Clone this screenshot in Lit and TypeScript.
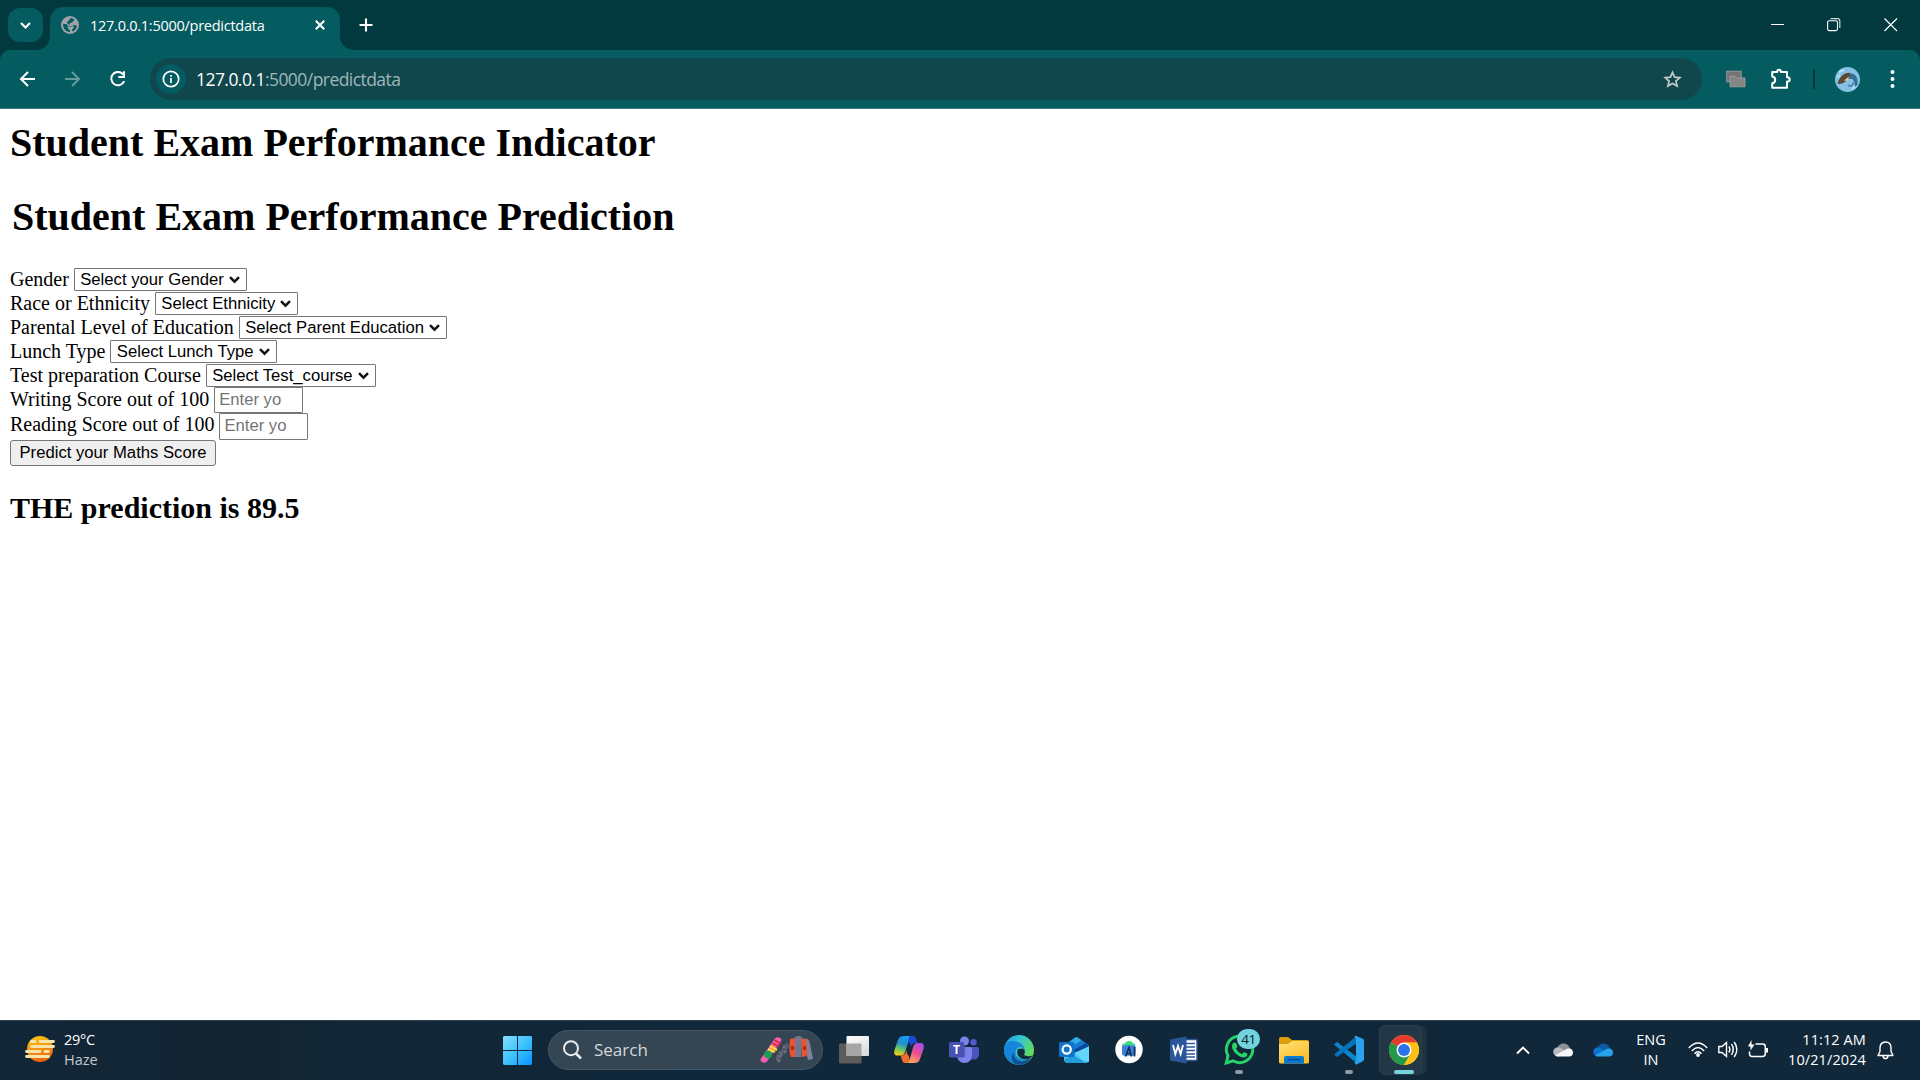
import { LitElement, html, css, svg, TemplateResult } from "lit";
import { customElement } from "lit/decorators.js";

const icon = (w: number, h: number, body: TemplateResult) =>
  html`<svg width=${w} height=${h} viewBox="0 0 ${w} ${h}" fill="none">${body}</svg>`;

const chevron = svg`<path d="M2 3.2 L6.5 7.7 L11 3.2" stroke="#111" stroke-width="2.4"/>`;

@customElement("browser-bar")
class BrowserBar extends LitElement {
  static styles = css`
    :host { display: block; height: 109px; font-family: "Open Sans", "Noto Sans", sans-serif; color: #fff; }
    svg { display: block; flex: none; }
    .strip { height: 50px; background: #02393e; display: flex; align-items: flex-start; }
    .menu { width: 35px; height: 34px; margin: 8px 7px 0 8px; border-radius: 12px; background: #045b60; display: grid; place-items: center; }
    .tab { position: relative; width: 290px; height: 43px; margin-top: 7px; box-sizing: border-box; padding: 0 15px 7px 11px; border-radius: 13px 13px 0 0; background: #045b60; display: flex; align-items: center; }
    .flare { position: absolute; bottom: 0; width: 13px; height: 13px; }
    .flare.l { left: -13px; background: radial-gradient(circle at 0 0, transparent 12.5px, #045b60 13px); }
    .flare.r { right: -13px; background: radial-gradient(circle at 100% 0, transparent 12.5px, #045b60 13px); }
    .title { margin-left: 11px; flex: 1; font-size: 14.5px; letter-spacing: -0.26px; white-space: nowrap; line-height: 20px; padding-top: 1px; }
    .plus { margin: 18px 0 0 19px; }
    .spacer { flex: 1; }
    .win { display: flex; margin: 18px 22px 0 0; gap: 43px; }
    .wrap { background: #02393e; }
    .bar { height: 58px; background: #045b60; border-bottom: 1px solid #3d7f86; border-radius: 10px 10px 0 0; display: flex; align-items: center; padding: 0 21px 0 19px; }
    .nav { display: flex; gap: 28px; width: 131px; }
    .omni { width: 1552px; height: 42px; border-radius: 21px; background: #10474d; box-sizing: border-box; padding: 0 20px 0 6px; display: flex; align-items: center; }
    .info { width: 30px; height: 30px; border-radius: 50%; background: #045b60; display: grid; place-items: center; }
    .url { margin-left: 10px; flex: 1; font-size: 17.5px; letter-spacing: -0.55px; color: #a0b6b9; line-height: 24px; }
    .url b { font-weight: 400; color: #fff; }
    .ext { margin-left: 24px; }
    .puzzle { margin-left: 24px; margin-right: 1px; }
    .sep { width: 2px; height: 20px; background: #02393e; margin: 0 20px 0 20px; }
    .dots { margin-left: 30px; }
  `;

  render() {
    return html`
      <div class="strip">
        <div class="menu">${icon(13, 11, svg`<path d="M2 3 L6.5 7.5 L11 3" stroke="#fff" stroke-width="2.2"/>`)}</div>
        <div class="tab">
          <span class="flare l"></span><span class="flare r"></span>
          ${icon(18, 18, svg`<circle cx="9" cy="9" r="9" fill="#9fa3a7"/>
            <path d="M9.8 2.2 C7.8 2.8 9 4.6 7.2 5 C5.6 5.4 6.8 7 5.4 7.2 H2.2 C1.4 11.8 4.6 15.9 9 16 V14 C6.8 13.6 7.4 11.4 6 10.4 H10.4 C12.4 11 12.2 12.4 11.2 13 V15.6 C14 14.8 15.8 12.2 15.8 9.4 C14.8 10 14.2 9 12.8 9 H9.2 C7.8 8 8.8 6.6 10.2 6.8 C11.8 6.8 11.2 5.2 12.6 5 L13.4 3.7 C12.4 2.6 11.2 2.2 9.8 2.2Z" fill="#045b60"/>
            <path d="M2.4 7.4 H5.2 C6.6 7.8 6.6 8.4 7.6 9.4 H10.6 C12 9.8 12.6 11.2 11.4 12.6" stroke="#9fa3a7" stroke-width="1.4"/>`)}
          <span class="title">127.0.0.1:5000/predictdata</span>
          ${icon(10, 10, svg`<path d="M.8 .8 L9.2 9.2 M9.2 .8 L.8 9.2" stroke="#fff" stroke-width="2"/>`)}
        </div>
        <div class="plus">${icon(14, 14, svg`<path d="M7 .5 V13.5 M.5 7 H13.5" stroke="#fff" stroke-width="2.1"/>`)}</div>
        <div class="spacer"></div>
        <div class="win">
          ${icon(13, 13, svg`<path d="M0 6.5 H13" stroke="#fff"/>`)}
          ${icon(14, 14, svg`<path d="M3.5 .7 H10.8 Q12.8 .7 12.8 2.7 V10" stroke="#cdd9da" stroke-width="1.2"/><rect x=".6" y="2.7" width="9.9" height="9.9" rx="1.6" stroke="#fff" stroke-width="1.1"/>`)}
          ${icon(14, 14, svg`<path d="M.5 .5 L13 13 M13 .5 L.5 13" stroke="#fff" stroke-width="1.15"/>`)}
        </div>
      </div>
      <div class="wrap"><div class="bar">
        <div class="nav">
          ${icon(17, 16, svg`<path d="M16 8 H2.6 M9 1 L2 8 L9 15" stroke="#fff" stroke-width="2"/>`)}
          ${icon(17, 16, svg`<path d="M1 8 H14.6 M8 1 L15 8 L8 15" stroke="#659b9f" stroke-width="2"/>`)}
          ${icon(18, 16, svg`<path d="M14.4 3.6 A6.7 6.7 0 1 0 15.2 10.2" stroke="#fff" stroke-width="2"/><path d="M16 .3 V7 H9.3 V5.1 H14 V.3Z" fill="#fff"/>`)}
        </div>
        <div class="omni">
          <div class="info">${icon(18, 18, svg`<circle cx="9" cy="9" r="7.7" stroke="#fff" stroke-width="1.7"/><path d="M9 8 V13 M9 5 V6.7" stroke="#fff" stroke-width="1.7"/>`)}</div>
          <span class="url"><b>127.0.0.1</b>:5000/predictdata</span>
          ${icon(19, 19, svg`<path d="M9.5 2.4 L11.6 7.1 L16.8 7.6 L12.9 11 L14.1 16.1 L9.5 13.4 L4.9 16.1 L6.1 11 L2.2 7.6 L7.4 7.1Z" stroke="#c3c9ca" stroke-width="1.7"/>`)}
        </div>
        <div class="ext">${icon(20, 18, svg`<rect x=".7" y="1.2" width="14.5" height="10.6" fill="#757575" stroke="#969696"/><path d="M4 6.2 H9 L10.4 8 H19 V16.8 H4Z" fill="#858585" stroke="#a3a3a3" stroke-width=".8"/>`)}</div>
        <div class="puzzle">${icon(22, 22, svg`<path d="M2.2 4 H7.2 C7.2 1 10.8 1 10.8 4 H17 V9.2 C20.6 9.2 20.6 13.6 17 13.6 V19.8 H2.2 V15.2 C6.2 15 6.2 9 2.2 8.6Z" stroke="#fff" stroke-width="2" stroke-linejoin="round"/>`)}</div>
        <div class="sep"></div>
        ${icon(25, 25, svg`<circle cx="12.5" cy="12.5" r="12.5" fill="#86c1e5"/><path d="M4 5 L9 3 M2 10 L5 8 M17 22 L22 18" stroke="#b9e0f3" stroke-width="2"/><path d="M12 8 C17 4 24 8 22.500 18 L20 20 C20 14 18 11 14 12Z" fill="#376d91"/><path d="M2.5 16.500 C5 9 10 5 15.5 6 C14 8 15 9 13 12 C11 15 6 18 2.5 16.500Z" fill="#5a4836"/><path d="M9 13.500 L14 9.500 L12.500 14Z" fill="#e2cf9a"/><path d="M13 18 C15 20 18 19 19 15" stroke="#4c8bb3" stroke-width="2"/>`)}
        <div class="dots">${icon(5, 18, svg`<circle cx="2.5" cy="2" r="2" fill="#fff"/><circle cx="2.5" cy="9" r="2" fill="#fff"/><circle cx="2.5" cy="16" r="2" fill="#fff"/>`)}</div>
      </div></div>`;
  }
}

@customElement("exam-page")
class ExamPage extends LitElement {
  static styles = css`
    :host { display: block; box-sizing: border-box; height: 911px; background: #fff; color: #000; padding: 11px 10px 10px; font-family: "Liberation Serif", "Times New Roman", serif; }
    h1 { margin: 0; font-size: 40px; line-height: 46px; height: 46px; font-weight: 700; white-space: nowrap; }
    .second { margin-top: 28px; padding-left: 2px; }
    form { margin-top: 28px; font-size: 20px; display: flex; flex-direction: column; }
    .row { height: 24px; display: flex; align-items: flex-start; white-space: pre; line-height: 22px; }
    .row.score { height: 26px; margin-top: -1px; }
    .row.last { height: 27px; }
    .box { display: grid; height: 23px; }
    .box > * { grid-area: 1 / 1; }
    .box svg { justify-self: end; align-self: center; margin-right: 6px; pointer-events: none; }
    select { appearance: none; margin: 0; box-sizing: border-box; width: 100%; height: 23px; border: 1px solid #767676; border-radius: 1px; background: #fff; color: #000; padding: 0 0 0 5.4px; font: 16.667px/20px "Liberation Sans", Arial, sans-serif; }
    input { margin: 0; box-sizing: border-box; width: 89px; height: 26px; border: 1px solid #767676; border-radius: 1px; padding: 0 20px 1px 4px; font: 16.667px "Liberation Sans", Arial, sans-serif; }
    .last input { height: 27px; padding-bottom: 2px; }
    .score label { padding-top: 1px; }
    input::placeholder { color: #757575; }
    button { margin: 0; box-sizing: border-box; width: 206px; height: 26px; padding: 0; border: 1px solid #767676; border-radius: 3px; background: #efefef; color: #000; font: 16.667px/22px "Liberation Sans", Arial, sans-serif; white-space: nowrap; }
    h2 { margin: 25px 0 0; font-size: 30px; line-height: 34px; }
    .w173 { width: 173px; } .w143 { width: 143px; } .w208 { width: 208px; } .w167 { width: 167px; } .w170 { width: 170px; }
  `;

  private fields = [
    ["Gender", "Select your Gender", "w173"],
    ["Race or Ethnicity", "Select Ethnicity", "w143"],
    ["Parental Level of Education", "Select Parent Education", "w208"],
    ["Lunch Type", "Select Lunch Type", "w167"],
    ["Test preparation Course", "Select Test_course", "w170"],
  ];

  render() {
    return html`
      <h1>Student Exam Performance Indicator</h1>
      <h1 class="second">Student Exam Performance Prediction</h1>
      <form>
        ${this.fields.map(([label, text, width]) => html`<div class="row"><label>${label} </label><span class="box ${width}"><select><option>${text}</option></select>${icon(13, 11, chevron)}</span></div>`)}
        <div class="row score"><label>Writing Score out of 100 </label><input placeholder="Enter your Writing Score"></div>
        <div class="row last"><label>Reading Score out of 100 </label><input placeholder="Enter your Reading Score"></div>
        <button type="button">Predict your Maths Score</button>
      </form>
      <h2>THE prediction is 89.5</h2>`;
  }
}

const apps: { body: TemplateResult; mark?: string; badge?: string }[] = [
  { body: svg`<rect x="0" y="8.5" width="22.500" height="20" rx="1" fill="#5c5c5c"/><rect x="7.500" y="1" width="22.500" height="20" rx="1" fill="url(#tv)"/><path d="M7.500 8.500 H22.500 V21 H8.500 Q7.500 21 7.500 20Z" fill="#a6a6a6"/>` },
  { body: svg`<path d="M10 1 H19 C17 1 15.500 3 15 5 L11 17 C10 20 8.500 20.500 6 20.500 H3 C.5 20.500 -.3 18 .5 15 L4 5 C5 2 7 1 10 1Z" fill="url(#cp1)"/><path d="M16 1 H19 C21 1 22 3 22.600 5.500 L23.300 8 C20 8 18 8 16.500 12 C17 7 14 8 14.500 5 C15 3 15 1 16 1Z" fill="#1b48d4"/><path d="M20 28 H12 C14 28 15.200 26 16 23.500 L19.200 12 C20 9 21.500 8 24 8 H27 C29.500 8 30.500 10.500 29.500 14 L26 24 C25 27 23 28 20 28Z" fill="url(#cp2)"/><path d="M14 28 H11 C9 28 8.300 26 7.500 23.500 L6.800 20.500 C10 20.500 11 19.500 12.500 15 C13 22 15 19 15.400 23 C15 26 15 28 14 28Z" fill="#f36a30"/>` },
  { body: svg`<circle cx="24.500" cy="7.200" r="3.200" fill="#5059c9"/><path d="M21 12 H28.500 Q30 12 30 13.500 V19 C30 22.500 27.500 24.500 25 24.500 H21Z" fill="#4b53bc"/><circle cx="15.500" cy="6" r="4.500" fill="#7b83eb"/><path d="M8 12 H21.500 Q23 12 23 13.500 V20 C23 25 19.500 28 15.500 28 C11.500 28 8 25 8 20Z" fill="#7b83eb"/><path d="M9 11 H16.500 V22 H8.500Z" fill="#4b50ac" opacity=".5"/><rect y="7" width="15" height="15.500" rx="1.300" fill="#4a51b5"/><text x="7.500" y="19" text-anchor="middle" font-size="12" font-weight="700" fill="#fff">T</text>` },
  { body: svg`<circle cx="15" cy="15" r="15" fill="url(#ed1)"/><path d="M0 15 C0 8 6 5 12 6.500 C18 8 21 12 20.500 16 C20 12.500 16 11 13.500 13 C9 17 13 24 18 24.500 C22 25.500 25.500 24 27.800 21.500 C24 29 17 31 11 29.300 C4 27 0 21 0 15Z" fill="#1684d8"/><path d="M9.800 17.500 C9 23 14 28 20 26 C23.500 25 26 23.500 27.800 21.500 C24 29 17 31 11 29.300 C7 25.500 7 20 9.800 17.500Z" fill="#104f91"/><path d="M20 19.800 C21 18.500 21 17 20.500 15 L18.500 13.500 L14 14 C12 18 14 22.500 18.500 24 C22.500 25 25.600 23.700 27.800 21.500 L29 20.500 C26 21.500 21 21.500 20 19.800Z" fill="#112b3f"/>` },
  { body: svg`<path d="M5 10.500 L16 2.500 Q17.200 1.600 18.500 2.500 L28.500 9 Q30 10 30 11.500 V24 H5Z" fill="#127cd0"/><path d="M5 10.500 L17.500 2 L22.500 5 L10 14Z" fill="#36a9e8"/><path d="M13 16 L27 8 L30 11 L15 21Z" fill="#0c469b"/><path d="M5 20 L15 18 L30 11.500 V24 Q30 28 26 28 H9 Q5 28 5 24Z" fill="#43c9f4"/><path d="M16 18 L30 11.500 V27 L24 25Z" fill="#62d7fa"/><path d="M6 24 L14 20 L27 28 H9 Q6 28 6 24Z" fill="#269ddb"/><rect y="7" width="15.500" height="15" rx="1.500" fill="#0e73cd"/><circle cx="7.700" cy="14.500" r="4.100" stroke="#fff" stroke-width="2.200"/>` },
  { body: svg`<circle cx="15" cy="14.500" r="13.700" fill="#fff"/><path d="M10.500 9.500 Q11 6 15 6 Q19 6 19.500 9.500Z" fill="#3ddc84"/><rect x="8" y="9.200" width="13.500" height="11.500" rx="2.500" fill="#3c7fe4"/><path d="M11.500 21.500 L15 12.500 L17.500 21.500 M13 18.500 H17.500 M20.500 12 V21.500" stroke="#12304a" stroke-width="1.700"/><path d="M8.500 9.500 H21" stroke="#3ddc84" stroke-width="1.800"/>` },
  { body: svg`<rect x="15" y="4.500" width="13" height="21" rx="1" fill="#fff" stroke="#2b579a" stroke-width="1.500"/><path d="M17 8.500 H26 M17 12 H26 M17 15.500 H26 M17 19 H26 M17 22 H26" stroke="#2b579a" stroke-width="1.500"/><path d="M1 4.500 L17.500 1.500 V28.500 L1 25.500Z" fill="#2b579a"/><path d="M4 10 L6.300 19 L9 11 L11.600 19 L14 10" stroke="#fff" stroke-width="1.900"/>` },
  { body: svg`<path d="M2.300 28 L4 20.700 A13.200 13.200 0 1 1 9 25.800Z" stroke="#25d366" stroke-width="3"/><path d="M10 7.500 L12 8 L13.500 11.500 L12 13.700 C13.500 16.500 15.500 18 18 19 L20 17 L23.500 18.800 C23.500 22 21 23 18.500 22.500 C13 21 8.500 16 8 12 C7.800 9.500 9 8 10 7.500Z" fill="#25d366"/>`, mark: "dot", badge: "41" },
  { body: svg`<path d="M0 4 Q0 2 2 2 H9 L13 5 H28 Q30 5 30 7 V12 H0Z" fill="#dd9d0c"/><path d="M0 9 H9 L13 6 H28.500 Q30 6 30 7.500 V27 Q30 28.500 28.500 28.500 H1.500 Q0 28.500 0 27Z" fill="url(#fo)"/><path d="M5 28.500 V23 Q5 21 7 21 H23 Q25 21 25 23 V28.500Z" fill="#087bd1"/><path d="M8.500 24.700 H21.500" stroke="#084b86" stroke-width="1.300"/>` },
  { body: svg`<path d="M0 9.500 L3 7 L23 22 V28.500 Z" fill="#0d87cb"/><path d="M0 19.500 L3 22 L23 8 V.8Z" fill="#0873b9"/><path d="M21 .5 L28.800 3.800 Q30 4.300 30 6 V24 Q30 25.500 28.800 26.200 L22 29.700 L20.500 28 L22 26 V4 L20.500 2Z" fill="#2aa3ec"/>`, mark: "dot" },
  { body: svg`<circle cx="15" cy="15" r="15" fill="#fbc116"/><path d="M15 15 L2 7.500 A15 15 0 0 1 28 7.500 H15Z" fill="#e33b2e"/><path d="M2 7.500 A15 15 0 0 0 15 30 L21.500 18.750 L15 15Z" fill="#24984b"/><path d="M15 7.500 H28 A15 15 0 0 1 15 30 L21.500 18.750Z" fill="#fbc116"/><circle cx="15" cy="15" r="7.500" fill="#fff"/><circle cx="15" cy="15" r="6" fill="#2b73e8"/>`, mark: "active" },
];

@customElement("task-bar")
class TaskBar extends LitElement {
  static styles = css`
    :host { display: block; height: 60px; box-sizing: border-box; border-top: 1px solid #2c4150; background: linear-gradient(90deg, #112638, #132533 12%, #10283b 35%, #11273a 100%); color: #fff; font-family: "Open Sans", "Noto Sans", sans-serif; }
    .bar { height: 58px; display: flex; align-items: center; }
    svg { display: block; flex: none; overflow: visible; }
    .weather { width: 478px; padding-left: 25px; display: flex; gap: 9px; font-size: 14.5px; line-height: 20px; letter-spacing: -0.3px; }
    .haze { color: #c3c9ce; letter-spacing: 0; }
    .search { width: 275px; height: 40px; margin: 0 3px 0 16px; box-sizing: border-box; border: 1px solid #465866; border-radius: 20px; background: #344653; display: flex; align-items: center; padding: 0 9px 0 14px; }
    .search span { flex: 1; margin-left: 12px; font-size: 17px; line-height: 24px; color: #d3d8db; }
    .app { position: relative; width: 55px; height: 58px; display: grid; place-items: center; }
    .app svg { position: relative; }
    .dot::after { content: ""; position: absolute; bottom: 5px; width: 8px; height: 4px; border-radius: 2px; background: #8f9aa3; }
    .active::before { content: ""; position: absolute; left: 3px; top: 4px; width: 43px; height: 50px; border-radius: 6px; background: #243746; border: 1px solid #2c3f4d; box-shadow: 6px 0 0 -1px #1e3342; box-sizing: border-box; }
    .active::after { content: ""; position: absolute; bottom: 5px; width: 20px; height: 4px; border-radius: 2px; background: #77d3da; }
    .badge { position: absolute; left: 26px; top: 8px; width: 23px; height: 20px; border-radius: 10px; background: #71d3db; color: #0c2228; font-size: 13.5px; line-height: 20px; text-align: center; letter-spacing: -0.5px; }
    .tray { margin-left: auto; display: flex; align-items: center; padding-right: 26px; }
    .lang { width: 50px; margin: 0 12px 0 13px; text-align: center; font-size: 14.5px; line-height: 20px; }
    .clock { width: 90px; margin: 0 11px 0 8px; text-align: right; font-size: 14.5px; line-height: 20px; letter-spacing: 0.1px; white-space: nowrap; display: flex; flex-direction: column; align-items: flex-end; }
    .g20 { display: flex; gap: 20px; margin-left: 23px; }
    .g10 { display: flex; gap: 10px; }
  `;

  private cloud(a: string, b: string, c: string) {
    return icon(20, 14, svg`<path d="M4 6 C5 2 8 .5 11 .5 C14 .5 16.500 3 17 6 L10 9Z" fill=${a}/><path d="M1.500 12 C-1 9 .5 5 4 4.500 C7 4 8.500 5.500 10 6.500 L16 10 L5 13.500Z" fill=${b}/><path d="M2 12.500 L12 7 C17 3.500 20 6.500 20 9.500 C20 12 18.500 13.500 16 13.500 H4.500 Q3 13.500 2 12.500Z" fill=${c}/>`);
  }

  render() {
    return html`
      <div class="bar">
        <div class="weather">
          <svg width="30" height="28" viewBox="0 0 30 28"><defs><linearGradient id="sun" x2=".3" y2="1"><stop stop-color="#f9cd13"/><stop offset="1" stop-color="#ee650c"/></linearGradient></defs><g transform="translate(0 6)"><circle cx="15" cy="13" r="13" fill="url(#sun)"/><path d="M6.500 5.500 H10 M15 5.500 H28.500 M6.500 10.500 H28.500 M1.500 15.500 H15 M20 15.500 H23.500 M1.500 20.500 H23.500" stroke="#f6e4a8" stroke-width="2.800" stroke-linecap="round"/></g></svg>
          <div><div>29°C</div><div class="haze">Haze</div></div>
        </div>
        <svg width="29" height="29" viewBox="0 0 29 29"><defs><linearGradient id="win" gradientUnits="userSpaceOnUse" x1="0" y1="0" x2="29" y2="29"><stop stop-color="#86dfff"/><stop offset=".5" stop-color="#3dc3fd"/><stop offset="1" stop-color="#0a92ff"/></linearGradient></defs><path d="M1 0 H14 V14 H0 V1Z M15 0 H28 L29 1 V14 H15Z M0 15 H14 V29 H1 L0 28Z M15 15 H29 V28 L28 29 H15Z" fill="url(#win)"/></svg>
        <div class="search">
          ${icon(19, 20, svg`<circle cx="8" cy="8.200" r="7" stroke="#e7ebed" stroke-width="2"/><path d="M13 13.500 L18 18.500" stroke="#e7ebed" stroke-width="2.600"/>`)}
          <span>Search</span>
          ${icon(53, 28, svg`<path d="M14.500 3 Q16 .5 19 1.500 Q22.500 2.500 21 5 L8 24 Q6.500 27.500 3 26.500 Q-.5 25.500 1 22.500Z" fill="#f85db4"/><path d="M14.500 4 L21 8 M12.500 7 L19 11" stroke="#d82c3c" stroke-width="2"/><path d="M10 10 L17 14 M8 13 L15 16" stroke="#ffdf30" stroke-width="2.400"/><circle cx="8" cy="18.500" r="3.800" fill="#13a252"/><path d="M17 25 C22 22 16 18 22 17 C27 15 22 11 28 9" stroke="#676a7c" stroke-width="5" stroke-dasharray="3 1"/><path d="M45 3 Q49 2 50 8 L53 23 L48 24 L45 13Z" fill="#80819c"/><path d="M30 3 L35 2 V21 H31 Q29 17 29.500 9Z M41 2 L46 3 Q48 12 46.500 20 L42 21Z" fill="#f0522e"/><path d="M35 1 Q38.500 -1 42 1 L41.500 7 V21 H35 V7Z" fill="#73778e"/><path d="M31 10 H34 V14 H31Z M43 10 H46 V14 H43Z" fill="#a72c23"/>`)}
        </div>
        ${apps.map((a) => html`<div class="app ${a.mark ?? ""}"><svg width="30" height="30" viewBox="0 0 30 30" fill="none"><defs>
          <linearGradient id="tv" x2=".5" y2="1"><stop stop-color="#fff"/><stop offset="1" stop-color="#ddd"/></linearGradient>
          <linearGradient id="cp1" x1=".6" x2=".3" y2="1"><stop stop-color="#169ff0"/><stop offset=".4" stop-color="#1e91ce"/><stop offset=".7" stop-color="#6bc763"/><stop offset="1" stop-color="#f4cb13"/></linearGradient>
          <linearGradient id="cp2" x1=".8" x2=".3" y2="1"><stop stop-color="#a54eea"/><stop offset=".5" stop-color="#ec4f92"/><stop offset="1" stop-color="#ffac59"/></linearGradient>
          <linearGradient id="ed1" y2=".5"><stop stop-color="#1898dd"/><stop offset=".45" stop-color="#31c4d9"/><stop offset="1" stop-color="#65dd56"/></linearGradient>
          <linearGradient id="fo" x2=".6" y2="1"><stop stop-color="#ffe078"/><stop offset="1" stop-color="#fdbd27"/></linearGradient>
        </defs>${a.body}</svg>${a.badge ? html`<span class="badge">${a.badge}</span>` : ""}</div>`)}
        <div class="tray">
          ${icon(14, 9, svg`<path d="M1 7.500 L7 1.500 L13 7.500" stroke="#fff" stroke-width="1.900"/>`)}
          <div class="g20">${this.cloud("#8d9298", "#b8bcc0", "#f7f7f7")}${this.cloud("#0c59a6", "#0c73ce", "#28a3ea")}</div>
          <div class="lang">ENG<br>IN</div>
          <div class="g10">
            ${icon(20, 17, svg`<path d="M.8 7 Q10 -2.800 19.200 7 M3.800 10 Q10 3.200 16.200 10 M6.500 12.800 Q10 8.800 13.500 12.800" stroke="#fff" stroke-width="1.500"/><circle cx="10" cy="14" r="1.900" fill="#fff"/>`)}
            ${icon(20, 17, svg`<path d="M.8 5.500 H4 L8.500 1.500 V15.500 L4 11.500 H.8Z" stroke="#fff" stroke-width="1.400"/><path d="M10.800 5.500 Q13 8.500 10.800 11.500 M13.500 3.200 Q17 8.500 13.500 13.800 M16.200 1 Q21.500 8.500 16.200 16" stroke="#fff" stroke-width="1.500"/>`)}
            ${icon(20, 18, svg`<path d="M7.500 3 H14.500 Q17.300 3 17.300 5.500 V12.500 Q17.300 15.500 14.500 15.500 H4 Q1.500 15.500 1.500 12.500 V10.500" stroke="#fff" stroke-width="1.500"/><path d="M18 7 H20 V11.500 H18Z" fill="#fff"/><path d="M3.500 -1 V3.500 H6.500 L2.500 9.500 V5.500 H0Z" fill="#fff"/>`)}
          </div>
          <div class="clock"><span>11:12 AM</span><span>10/21/2024</span></div>
          ${icon(17, 19, svg`<path d="M8.500 1 C4.800 1 3 3.800 3 7 V10.500 L1 14.500 H16 L14 10.500 V7 C14 3.800 12.200 1 8.500 1Z M6 15 Q6.500 17.600 8.500 17.600 Q10.500 17.600 11 15" stroke="#fff" stroke-width="1.400" stroke-linejoin="round"/>`)}
        </div>
      </div>`;
  }
}

@customElement("app-root")
class AppRoot extends LitElement {
  static styles = css`:host { display: flex; flex-direction: column; width: 1920px; height: 1080px; overflow: hidden; background: #fff; }`;
  render() {
    return html`<browser-bar></browser-bar><exam-page></exam-page><task-bar></task-bar>`;
  }
}
